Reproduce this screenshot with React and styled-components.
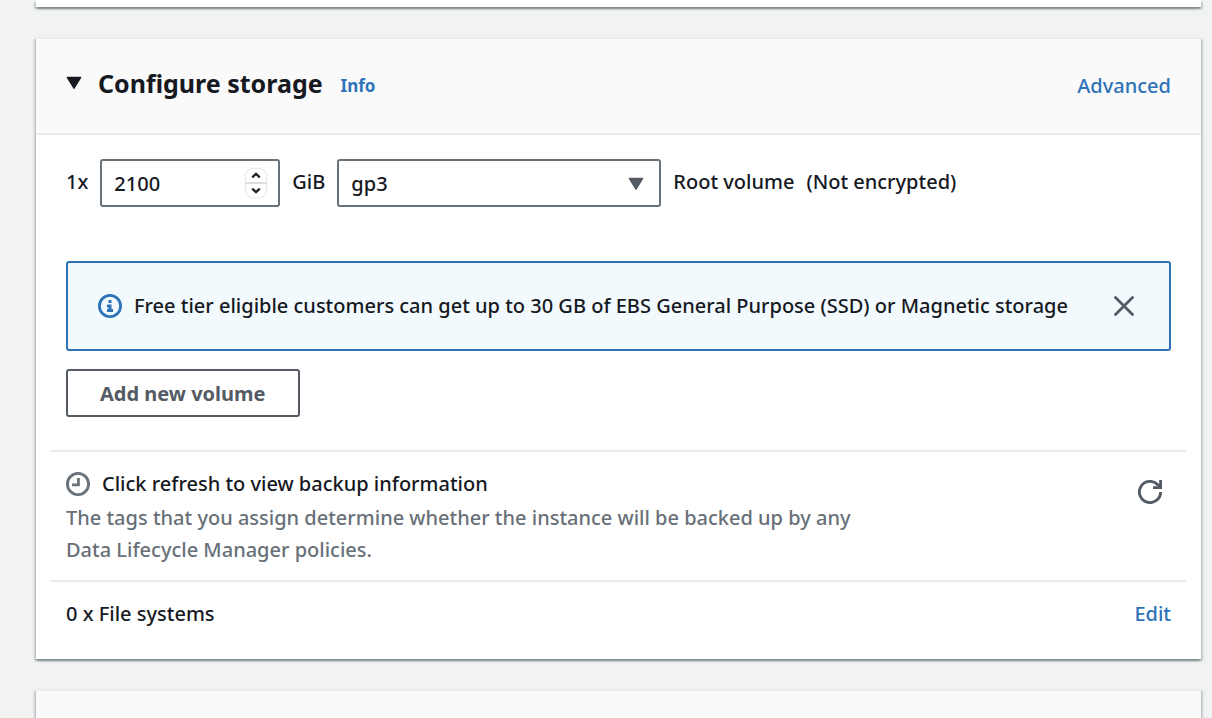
import React, { useState } from "react";
import styled, { createGlobalStyle } from "styled-components";

const GlobalStyle = createGlobalStyle`
  *, *::before, *::after { box-sizing: border-box; }
  body {
    margin: 0;
    background: #f1f3f3;
    color: #16191f;
    font-family: "Noto Sans", "Open Sans", sans-serif;
    font-size: 20px;
    font-weight: 500;
    line-height: 32px;
  }
  button, input, select { font: inherit; color: inherit; }
`;

const Page = styled.main`
  display: flex;
  flex-direction: column;
  gap: 30px;
  min-height: 100vh;
  padding: 0 11px 0 36px;
`;

const Card = styled.section`
  display: flex;
  flex-direction: column;
  flex-grow: ${(p) => (p.$grow ? 1 : 0)};
  background: #fff;
  border-top: ${(p) => (p.$open ? "0" : "2px solid #ebebeb")};
  box-shadow: 0 2px 2px 0 rgba(0, 28, 36, 0.3),
    2px 2px 2px 0 rgba(0, 28, 36, 0.15),
    -2px 2px 2px 0 rgba(0, 28, 36, 0.15);
`;

const PreviousBody = styled.div`
  height: 7px;
`;

const NextHeader = styled.div`
  flex: 1;
  background: #fafafa;
`;

const CardHeader = styled.header`
  display: flex;
  align-items: center;
  gap: 18px;
  padding: 25px 30px 31px;
  background: #fafafa;
  border-bottom: 2px solid #ebebeb;
`;

const Toggle = styled.button`
  display: flex;
  align-items: center;
  gap: 16px;
  padding: 0;
  border: 0;
  background: none;
  cursor: pointer;
`;

const Title = styled.h2`
  margin: 0;
  font-size: 25px;
  line-height: 32px;
  font-weight: 700;
`;

const Link = styled.a`
  color: #2e73b8;
  font-size: ${(p) => (p.$small ? "17px" : "20px")};
  font-weight: ${(p) => (p.$small ? 700 : 500)};
  line-height: 32px;
  margin-left: ${(p) => (p.$end ? "auto" : "0")};
  padding-top: ${(p) => (p.$header ? "6px" : "0")};
  text-decoration: none;
`;

const Body = styled.div`
  padding: 24px 15px 29px;
`;

const VolumeRow = styled.div`
  display: flex;
  align-items: center;
  gap: 12px;
  padding: 0 15px;
  margin-bottom: 54px;
`;

const RowLabel = styled.label`
  padding-bottom: 2px;
`;

const Field = styled.div`
  position: relative;
  flex: 0 1 ${(p) => p.$width};
`;

const controlStyle = `
  appearance: none;
  display: block;
  width: 100%;
  height: 48px;
  margin: 0;
  padding: 1px 12px 0;
  background: #fff;
  border: 2px solid #687078;
  border-radius: 3px;
  outline: none;
`;

const NumberInput = styled.input`
  ${controlStyle}
  appearance: textfield;
  &::-webkit-inner-spin-button { appearance: none; margin: 0; }
`;

const Select = styled.select`
  ${controlStyle}
`;

const Caret = styled.span`
  position: absolute;
  top: 0;
  right: 17px;
  display: flex;
  align-items: center;
  height: 100%;
  padding-top: 2px;
  pointer-events: none;
`;

const Stepper = styled.div`
  position: absolute;
  top: 10px;
  right: 14px;
  width: 20px;
  border-radius: 7px;
  box-shadow: 0 0 2px 0 rgba(0, 0, 0, 0.35);
  overflow: hidden;
`;

const StepButton = styled.button`
  display: flex;
  align-items: center;
  justify-content: center;
  width: 100%;
  height: ${(p) => (p.$up ? "15px" : "13px")};
  padding: 0;
  border: 0;
  border-bottom: ${(p) => (p.$up ? "2px solid #dcdcdc" : "0")};
  background: #fff;
`;

const Notice = styled.div`
  display: flex;
  align-items: center;
  gap: 12px;
  margin: 0 15px 18px;
  padding: 27px 35px 27px 30px;
  background: #f2fafd;
  border: 2px solid #2e73b8;
  border-radius: 3px;
`;

const NoticeText = styled.span`
  flex: 1;
`;

const IconButton = styled.button`
  display: flex;
  padding: 0;
  border: 0;
  background: none;
  cursor: pointer;
`;

const AddButton = styled.button`
  height: 48px;
  margin: 0 15px 33px;
  padding: 2px 32px 0;
  background: #fff;
  border: 2px solid #545b64;
  border-radius: 3px;
  color: #545b64;
  font-weight: 700;
  cursor: pointer;
`;

const Section = styled.div`
  display: flex;
  justify-content: space-between;
  align-items: ${(p) => (p.$top ? "flex-start" : "center")};
  padding: 16px 15px ${(p) => (p.$top ? "14px" : "0")};
  border-top: 2px solid #ebebeb;
`;

const BackupInfo = styled.div`
  max-width: 800px;
`;

const BackupTitle = styled.div`
  display: flex;
  align-items: center;
  gap: 12px;
  margin-bottom: 2px;
`;

const Description = styled.p`
  margin: 0;
  color: #687078;
`;

const RefreshButton = styled(IconButton)`
  margin: 12px 9px 0 0;
`;

const Triangle = ({ color }) => (
  <svg width="16" height="14" viewBox="0 0 16 14" aria-hidden="true">
    <path d="M1.5 1.5h13L8 12.2z" fill={color} stroke={color} strokeWidth="1.5" strokeLinejoin="round" />
  </svg>
);

const Chevron = ({ up }) => (
  <svg width="10" height="7" viewBox="0 0 10 7" aria-hidden="true">
    <path d={up ? "M1.2 5.3 5 1.9l3.8 3.4" : "M1.2 1.7 5 5.1l3.8-3.4"} fill="none" stroke="#222" strokeWidth="2.3" />
  </svg>
);

const InfoIcon = () => (
  <svg width="24" height="24" viewBox="0 0 24 24" aria-hidden="true">
    <circle cx="12" cy="12" r="10.6" fill="none" stroke="#2e73b8" strokeWidth="2.8" />
    <path d="M10.5 6h3v3h-3zM9 10.5h4.5V15H15v3H9v-3h1.5v-1.5H9z" fill="#2e73b8" />
  </svg>
);

const CloseIcon = () => (
  <svg width="20" height="20" viewBox="0 0 20 20" aria-hidden="true">
    <path d="M1.5 1.5l17 17M18.5 1.5l-17 17" fill="none" stroke="#545b64" strokeWidth="2.8" strokeLinecap="round" />
  </svg>
);

const ClockIcon = () => (
  <svg width="24" height="24" viewBox="0 0 24 24" aria-hidden="true">
    <circle cx="12" cy="12" r="10.6" fill="none" stroke="#687078" strokeWidth="2.8" />
    <path d="M12.4 6v6.8H6" fill="none" stroke="#687078" strokeWidth="2.8" />
  </svg>
);

const RefreshIcon = () => (
  <svg width="24" height="24" viewBox="0 0 24 24" aria-hidden="true">
    <path d="M22.6 12A10.6 10.6 0 1 1 19.8 4.8L22.4 7.6" fill="none" stroke="#545b64" strokeWidth="2.9" />
    <path d="M22.6 0v7.6H15" fill="none" stroke="#545b64" strokeWidth="2.9" />
  </svg>
);

export default function App() {
  const [size, setSize] = useState(2100);
  const [notice, setNotice] = useState(true);
  const [expanded, setExpanded] = useState(true);

  return (
    <>
      <GlobalStyle />
      <Page>
        <Card $open>
          <PreviousBody />
        </Card>

        <Card>
          <CardHeader>
            <Toggle aria-expanded={expanded} onClick={() => setExpanded(!expanded)}>
              <Triangle color="#16191f" />
              <Title>Configure storage</Title>
            </Toggle>
            <Link href="#info" $small $header>Info</Link>
            <Link href="#advanced" $end $header>Advanced</Link>
          </CardHeader>

          {expanded && (
            <Body>
              <VolumeRow>
                <RowLabel htmlFor="volume-size">1x</RowLabel>
                <Field $width="180px">
                  <NumberInput
                    id="volume-size"
                    type="number"
                    value={size}
                    onChange={(e) => setSize(Number(e.target.value))}
                  />
                  <Stepper>
                    <StepButton $up aria-label="Increase size" onClick={() => setSize(size + 1)}>
                      <Chevron up />
                    </StepButton>
                    <StepButton aria-label="Decrease size" onClick={() => setSize(size - 1)}>
                      <Chevron />
                    </StepButton>
                  </Stepper>
                </Field>
                <RowLabel htmlFor="volume-type">GiB</RowLabel>
                <Field $width="324px">
                  <Select id="volume-type" defaultValue="gp3">
                    <option value="gp3">gp3</option>
                  </Select>
                  <Caret>
                    <Triangle color="#545b64" />
                  </Caret>
                </Field>
                <RowLabel as="span">Root volume</RowLabel>
                <RowLabel as="span">(Not encrypted)</RowLabel>
              </VolumeRow>

              {notice && (
                <Notice role="status">
                  <InfoIcon />
                  <NoticeText>
                    Free tier eligible customers can get up to 30 GB of EBS General Purpose (SSD) or Magnetic storage
                  </NoticeText>
                  <IconButton aria-label="Dismiss" onClick={() => setNotice(false)}>
                    <CloseIcon />
                  </IconButton>
                </Notice>
              )}

              <AddButton>Add new volume</AddButton>

              <Section $top>
                <BackupInfo>
                  <BackupTitle>
                    <ClockIcon />
                    Click refresh to view backup information
                  </BackupTitle>
                  <Description>
                    The tags that you assign determine whether the instance will be backed up by any Data Lifecycle
                    Manager policies.
                  </Description>
                </BackupInfo>
                <RefreshButton aria-label="Refresh">
                  <RefreshIcon />
                </RefreshButton>
              </Section>

              <Section>
                <span>0 x File systems</span>
                <Link href="#edit">Edit</Link>
              </Section>
            </Body>
          )}
        </Card>

        <Card $grow>
          <NextHeader />
        </Card>
      </Page>
    </>
  );
}
